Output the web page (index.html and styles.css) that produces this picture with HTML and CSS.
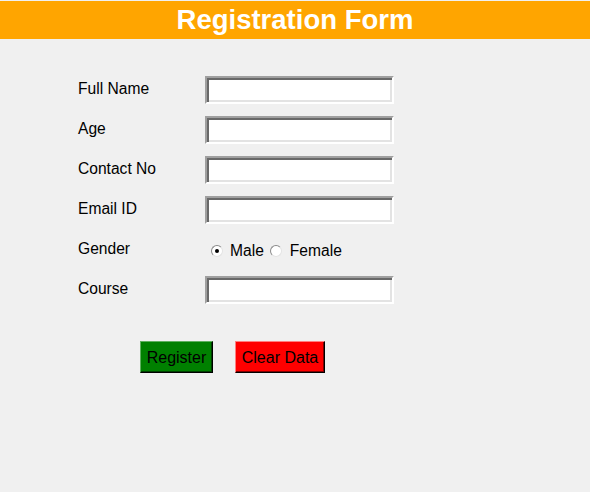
FILE: index.html
```html
<!DOCTYPE html>
<html>
<head>
<meta charset="utf-8">
<link rel="stylesheet" href="styles.css">
</head>
<body>
<header class="title-bar">Registration Form</header>
<main class="form">
  <div class="row"><span class="label">Full Name</span><span class="entry"></span></div>
  <div class="row"><span class="label">Age</span><span class="entry"></span></div>
  <div class="row"><span class="label">Contact No</span><span class="entry"></span></div>
  <div class="row"><span class="label">Email ID</span><span class="entry"></span></div>
  <div class="row">
    <span class="label">Gender</span>
    <span class="radios">
      <span class="radio checked"></span><span class="radio-text male">Male</span>
      <span class="radio"></span><span class="radio-text female">Female</span>
    </span>
  </div>
  <div class="row"><span class="label">Course</span><span class="entry"></span></div>
  <div class="buttons">
    <span class="btn btn-register">Register</span>
    <span class="btn btn-clear">Clear Data</span>
  </div>
</main>
</body>
</html>
```
FILE: styles.css
```css
html, body {
  margin: 0;
  padding: 0;
  background: #f0f0f0;
  width: 590px;
  height: 492px;
  overflow: hidden;
  font-family: "Liberation Sans", Arial, sans-serif;
  color: #000;
}
.title-bar {
  margin-top: 1px;
  height: 38px;
  background: #ffa500;
  color: #fff;
  font-weight: bold;
  font-size: 27.5px;
  line-height: 38px;
  text-align: center;
}
.form {
  padding-top: 31px;
  padding-left: 78px;
  display: flex;
  flex-direction: column;
}
.row {
  display: flex;
  align-items: center;
  height: 40px;
  font-size: 15.6px;
}
.label {
  width: 127px;
  position: relative;
  top: -1px;
}
.entry {
  box-sizing: border-box;
  width: 189px;
  height: 28px;
  background: #fff;
  border: 2px solid;
  border-color: #a0a0a0 #ffffff #ffffff #a0a0a0;
  box-shadow: inset 2px 2px 0 #696969, inset -2px -2px 0 #e3e3e3;
}
.radios {
  display: flex;
  align-items: center;
  padding-left: 6px;
  padding-top: 2px;
}
.radio {
  box-sizing: border-box;
  width: 12px;
  height: 12px;
  border-radius: 50%;
  background: #fff;
  border: 1px solid;
  border-color: #8a8a8a #e3e3e3 #e3e3e3 #8a8a8a;
  display: flex;
  align-items: center;
  justify-content: center;
}
.radio.checked::after {
  content: "";
  width: 4px;
  height: 4px;
  border-radius: 50%;
  background: #000;
}
.radio-text.male {
  margin-left: 7px;
  margin-right: 6px;
}
.radio-text.female {
  margin-left: 8px;
}
.buttons {
  display: flex;
  gap: 22px;
  padding-left: 62px;
  margin-top: 31px;
}
.btn {
  box-sizing: border-box;
  height: 32px;
  font-size: 16px;
  line-height: 31px;
  text-align: center;
  white-space: nowrap;
  border: 1px solid;
  border-color: #5fb05f #000 #000 #5fb05f;
}
.btn-register {
  width: 73px;
  background: #008000;
  box-shadow: inset -1px -1px 0 #004000;
}
.btn-clear {
  width: 90px;
  background: #ff0000;
  border-color: #ff8080 #000 #000 #ff8080;
  box-shadow: inset -1px -1px 0 #800000;
}
```
